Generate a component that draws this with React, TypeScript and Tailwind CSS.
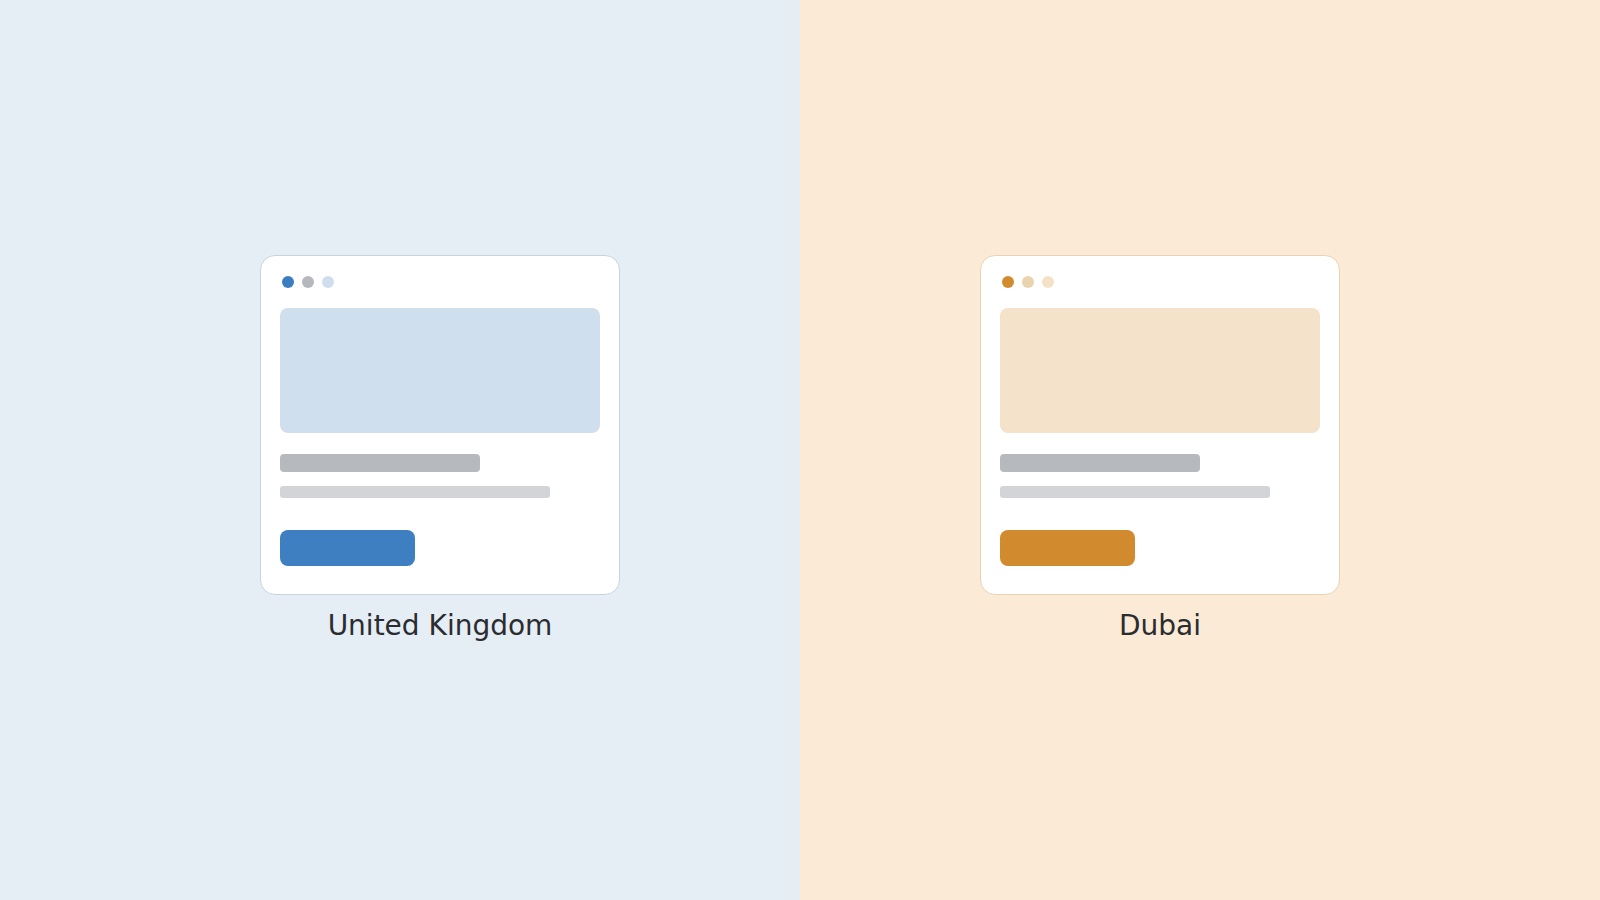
import React from 'react';

interface Region {
  name: string;
  bg: string;
  border: string;
  dots: [string, string, string];
  hero: string;
  accent: string;
  side: 'left' | 'right';
}

const regions: Region[] = [
  {
    name: 'United Kingdom',
    bg: 'bg-[#e5edf5]',
    border: 'border-[#c9d3df]',
    dots: ['bg-[#3b7dc0]', 'bg-[#b5b8bd]', 'bg-[#cfdeee]'],
    hero: 'bg-[#cfdfee]',
    accent: 'bg-[#3d7fc1]',
    side: 'left',
  },
  {
    name: 'Dubai',
    bg: 'bg-[#fbead6]',
    border: 'border-[#ead3b3]',
    dots: ['bg-[#d28a2e]', 'bg-[#ead4b0]', 'bg-[#f4e2c8]'],
    hero: 'bg-[#f4e2ca]',
    accent: 'bg-[#d28a2e]',
    side: 'right',
  },
];

// Small wireframe of a site, tinted per region
const SiteMock: React.FC<{ region: Region }> = ({ region }) => (
  <div className={`w-[360px] h-[340px] rounded-[15px] border bg-white p-[19px] flex flex-col ${region.border}`}>
    <div className="flex gap-2 ml-[2px] mt-[1px]">
      {region.dots.map((dot, i) => (
        <span key={i} className={`w-3 h-3 rounded-full ${dot}`} />
      ))}
    </div>
    <div className={`mt-5 h-[125px] w-full rounded-lg ${region.hero}`} />
    <div className="mt-[21px] h-[18px] w-[200px] rounded bg-[#b6b9be]" />
    <div className="mt-[14px] h-3 w-[270px] rounded-[3px] bg-[#d3d4d8]" />
    <div className={`mt-[32px] h-9 w-[135px] rounded-lg ${region.accent}`} />
  </div>
);

export default function App() {
  return (
    <div className="flex w-full h-[900px] font-['DejaVu_Sans',sans-serif]">
      {regions.map((region) => (
        <div
          key={region.name}
          className={`w-1/2 h-full flex items-center ${region.bg} ${
            region.side === 'left' ? 'justify-end pr-[180px]' : 'justify-start pl-[180px]'
          }`}
        >
          <div className="flex flex-col items-center gap-[11px] mt-[1px]">
            <SiteMock region={region} />
            <span className="text-[28px] leading-[1.4] text-[#2b2c2f]">{region.name}</span>
          </div>
        </div>
      ))}
    </div>
  );
}
